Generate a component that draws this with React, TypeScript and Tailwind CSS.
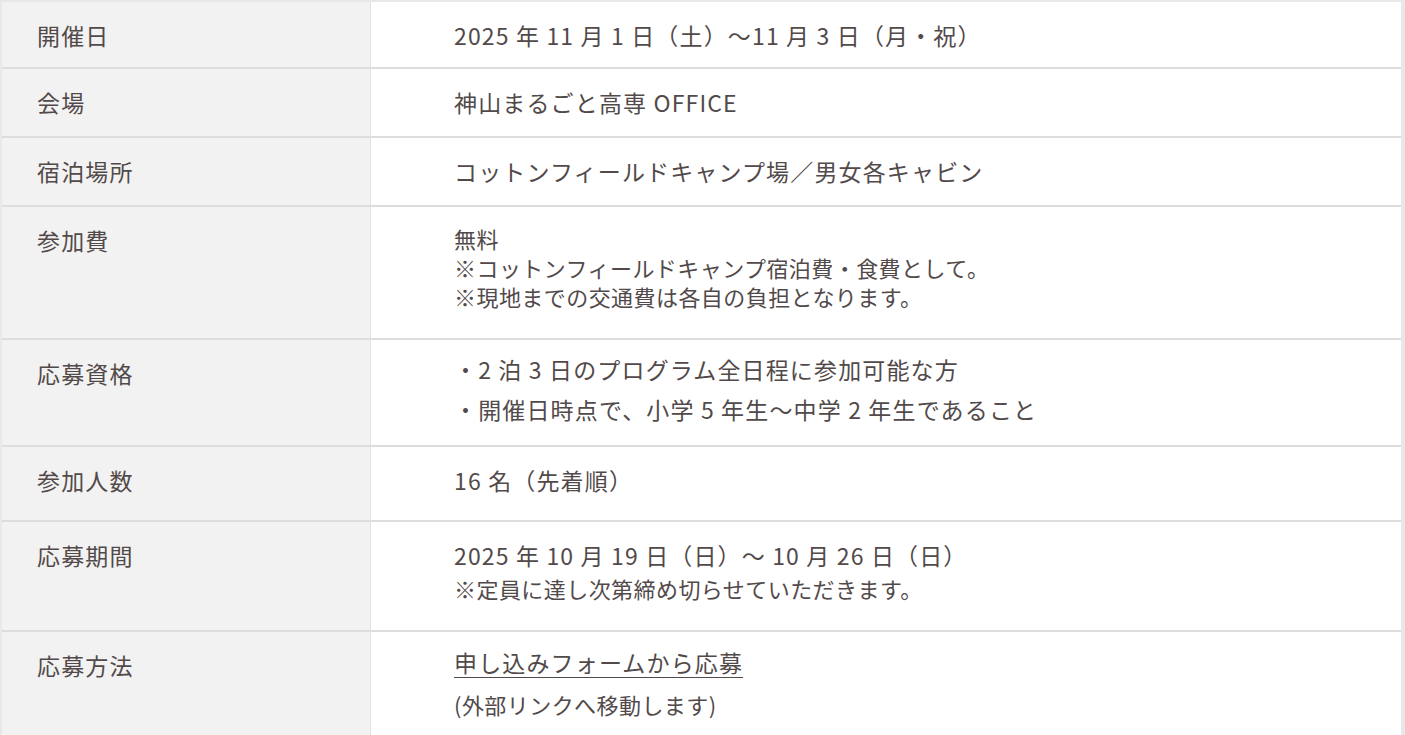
import React from "react";

type Row = { label: string; content: React.ReactNode; h: string };

const Note = ({ children, cls = "" }: { children: React.ReactNode; cls?: string }) => (
  <p className={`text-[22px] leading-[29px] tracking-[0.02em] ${cls}`}>{children}</p>
);

const rows: Row[] = [
  { label: "開催日", h: "h-[67px]", content: <p>2025 年 11 月 1 日（土）～11 月 3 日（月・祝）</p> },
  { label: "会場", h: "h-[69px]", content: <p>神山まるごと高専 OFFICE</p> },
  { label: "宿泊場所", h: "h-[69px]", content: <p>コットンフィールドキャンプ場／男女各キャビン</p> },
  {
    label: "参加費",
    h: "h-[133px]",
    content: (
      <div>
        <Note>無料</Note>
        <Note>※コットンフィールドキャンプ宿泊費・食費として。</Note>
        <Note>※現地までの交通費は各自の負担となります。</Note>
      </div>
    ),
  },
  {
    label: "応募資格",
    h: "h-[107px]",
    content: (
      <div className="flex flex-col gap-[8px] -mt-[4px]">
        <p>・2 泊 3 日のプログラム全日程に参加可能な方</p>
        <p>・開催日時点で、小学 5 年生〜中学 2 年生であること</p>
      </div>
    ),
  },
  { label: "参加人数", h: "h-[75px]", content: <p>16 名（先着順）</p> },
  {
    label: "応募期間",
    h: "h-[110px]",
    content: (
      <div>
        <p>2025 年 10 月 19 日（日）～ 10 月 26 日（日）</p>
        <Note cls="mt-[3px]">※定員に達し次第締め切らせていただきます。</Note>
      </div>
    ),
  },
  {
    label: "応募方法",
    h: "h-[105px]",
    content: (
      <div className="-mt-[3px]">
        <p>
          <a href="#" className="underline underline-offset-[5px] decoration-1">
            申し込みフォームから応募
          </a>
        </p>
        <Note cls="mt-[12px]">(外部リンクへ移動します)</Note>
      </div>
    ),
  },
];

export default function App() {
  return (
    <div
      className="w-[1405px] h-[735px] overflow-hidden bg-white text-[#524a4a] text-[23px] leading-[32px] font-normal tracking-[0.05em]"
      style={{ fontFamily: '"Noto Sans CJK JP", "Noto Sans", sans-serif' }}
    >
      <div className="border-t-[2px] border-r-[4px] border-l-[2px] border-[#e8e8e8] w-[1405px]">
        {rows.map((r, i) => (
          <div
            key={i}
            className={`flex ${r.h} ${i < rows.length - 1 ? "border-b-[2px] border-[#dddddd]" : ""}`}
          >
            <div className="w-[369px] shrink-0 bg-[#f2f2f2] border-r border-[#e2e2e2] pl-[35px] pt-[17px]">
              {r.label}
            </div>
            <div className="flex-1 pl-[83px] pt-[17px]">{r.content}</div>
          </div>
        ))}
      </div>
    </div>
  );
}
